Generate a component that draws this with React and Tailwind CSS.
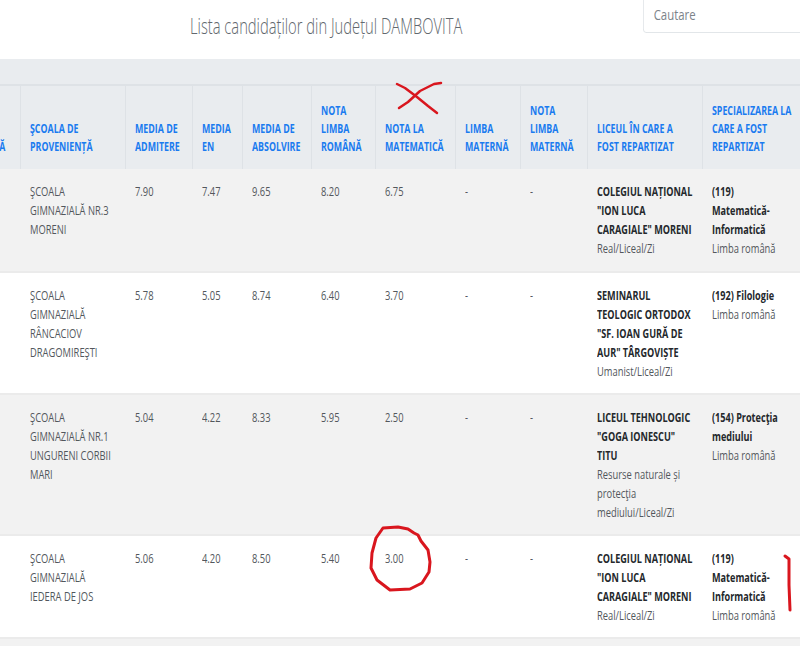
import React from 'react';

const font = { fontFamily: '"Open Sans", "Noto Sans", sans-serif' };

const headers = [
  ['LIMBĂ'],
  ['ŞCOALA DE', 'PROVENIENȚĂ'],
  ['MEDIA DE', 'ADMITERE'],
  ['MEDIA', 'EN'],
  ['MEDIA DE', 'ABSOLVIRE'],
  ['NOTA', 'LIMBA', 'ROMÂNĂ'],
  ['NOTA LA', 'MATEMATICĂ'],
  ['LIMBA', 'MATERNĂ'],
  ['NOTA', 'LIMBA', 'MATERNĂ'],
  ['LICEUL ÎN CARE A', 'FOST REPARTIZAT'],
  ['SPECIALIZAREA LA', 'CARE A FOST', 'REPARTIZAT'],
];

const rows = [
  {
    school: ['ŞCOALA', 'GIMNAZIALĂ NR.3', 'MORENI'],
    marks: ['7.90', '7.47', '9.65', '8.20', '6.75', '-', '-'],
    liceu: ['COLEGIUL NAȚIONAL', '"ION LUCA', 'CARAGIALE" MORENI'],
    profil: ['Real/Liceal/Zi'],
    spec: ['(119)', 'Matematică-', 'Informatică'],
    limba: 'Limba română',
    h: 'h-[103px]',
    bg: 'bg-[#f2f2f2]',
  },
  {
    school: ['ŞCOALA', 'GIMNAZIALĂ', 'RÂNCACIOV', 'DRAGOMIREŞTI'],
    marks: ['5.78', '5.05', '8.74', '6.40', '3.70', '-', '-'],
    liceu: ['SEMINARUL', 'TEOLOGIC ORTODOX', '"SF. IOAN GURĂ DE', 'AUR" TÂRGOVIȘTE'],
    profil: ['Umanist/Liceal/Zi'],
    spec: ['(192) Filologie'],
    limba: 'Limba română',
    h: 'h-[122px]',
    bg: 'bg-white',
  },
  {
    school: ['ŞCOALA', 'GIMNAZIALĂ NR.1', 'UNGURENI CORBII', 'MARI'],
    marks: ['5.04', '4.22', '8.33', '5.95', '2.50', '-', '-'],
    liceu: ['LICEUL TEHNOLOGIC', '"GOGA IONESCU"', 'TITU'],
    profil: ['Resurse naturale și', 'protecţia', 'mediului/Liceal/Zi'],
    spec: ['(154) Protecţia', 'mediului'],
    limba: 'Limba română',
    h: 'h-[141px]',
    bg: 'bg-[#f2f2f2]',
  },
  {
    school: ['ŞCOALA', 'GIMNAZIALĂ', 'IEDERA DE JOS'],
    marks: ['5.06', '4.20', '8.50', '5.40', '3.00', '-', '-'],
    liceu: ['COLEGIUL NAȚIONAL', '"ION LUCA', 'CARAGIALE" MORENI'],
    profil: ['Real/Liceal/Zi'],
    spec: ['(119)', 'Matematică-', 'Informatică'],
    limba: 'Limba română',
    h: 'h-[103px]',
    bg: 'bg-white',
  },
];

const widths = ['w-[100px]', 'w-[105px]', 'w-[67px]', 'w-[50px]', 'w-[69px]', 'w-[64px]', 'w-[80px]', 'w-[65px]', 'w-[67px]', 'w-[115px]', 'w-[118px]'];

// the screenshot is squeezed sideways, so every line of text is narrowed the same way
function Line({ children, className = 'h-[19px] leading-[19px] scale-x-[0.72]' }) {
  return (
    <span className={`block whitespace-nowrap origin-left ${className}`}>
      {children}
    </span>
  );
}

function Lines({ items, className }) {
  return items.map((t) => <Line key={t} className={className}>{t}</Line>);
}

function Marks() {
  return (
    <svg className="absolute left-0 top-0 pointer-events-none" width="800" height="646" fill="none" stroke="#d9161e" strokeLinecap="round" strokeLinejoin="round">
      <path strokeWidth="2.5" d="M397 84 L405 88 L417 97 L428 106 L437 113" />
      <path strokeWidth="2.5" d="M441 83 L434 84 L420 91 L408 102 L399 108" />
      <path strokeWidth="3" d="M418 535 L421 541 L428 550 L430 562 L429 572 L422 583 L410 589 L390 590 L377 580 L371 568 L372 553 L376 538 L383 528 L398 527 L408 529 L414 533 L418 535" />
      <path strokeWidth="3" d="M785 556 L789 559 L789 585 L790 610" />
    </svg>
  );
}

export default function App() {
  return (
    <div className="relative w-[800px] h-[646px] overflow-hidden bg-white text-[13px] text-[#52575c]" style={font}>
      <div className="flex h-[59px]">
        <h1 className="ml-[190px] mt-[11px] text-[22px] leading-[28px] font-light text-[#62686e] whitespace-nowrap origin-left scale-x-[0.67]">
          Lista candidaților din Județul DAMBOVITA
        </h1>
        <input
          placeholder="Cautare"
          className="absolute left-[643px] top-[-5px] w-[230px] h-[38px] px-[13px] bg-white border border-[#dee2e6] rounded-[4px] text-[15px] origin-left scale-x-[0.76] placeholder:text-[#7b838a]"
        />
      </div>
      <div className="h-[27px] bg-[#e9ecef] border-b-2 border-[#dee2e6]" />
      <table className="table-fixed border-collapse ml-[-80px] w-[900px]">
        <colgroup>
          {widths.map((w, i) => <col key={i} className={w} />)}
        </colgroup>
        <thead>
          <tr className="h-[83px] bg-[#e9ecef]">
            {headers.map((h, i) => (
              <th key={i} className={`align-bottom pb-[14px] font-bold text-left text-[#1a7bf0] border-r border-[#dee2e6] ${i === 0 ? 'pl-[57px]' : 'pl-[9.5px]'}`}>
                <Lines items={h} className="h-[18px] leading-[18px] scale-x-[0.68]" />
              </th>
            ))}
          </tr>
        </thead>
        <tbody>
          {rows.map((r) => (
            <tr key={r.school.join()} className={`${r.h} ${r.bg} border-b-2 border-[#ebebeb]`}>
              <td />
              <td className="align-top pt-[13px] pl-[10px]"><Lines items={r.school} /></td>
              {r.marks.map((m, i) => (
                <td key={i} className="align-top pt-[13px] pl-[10px]"><Line>{m}</Line></td>
              ))}
              <td className="align-top pt-[13px] pl-[10px]">
                <Lines items={r.liceu} className="h-[19px] leading-[19px] scale-x-[0.7] font-bold text-[#24282c]" />
                <Lines items={r.profil} />
              </td>
              <td className="align-top pt-[13px] pl-[10px]">
                <Lines items={r.spec} className="h-[19px] leading-[19px] scale-x-[0.7] font-bold text-[#24282c]" />
                <Line>{r.limba}</Line>
              </td>
            </tr>
          ))}
        </tbody>
      </table>
      <div className="h-[8px] bg-[#f2f2f2]" />
      <Marks />
    </div>
  );
}
